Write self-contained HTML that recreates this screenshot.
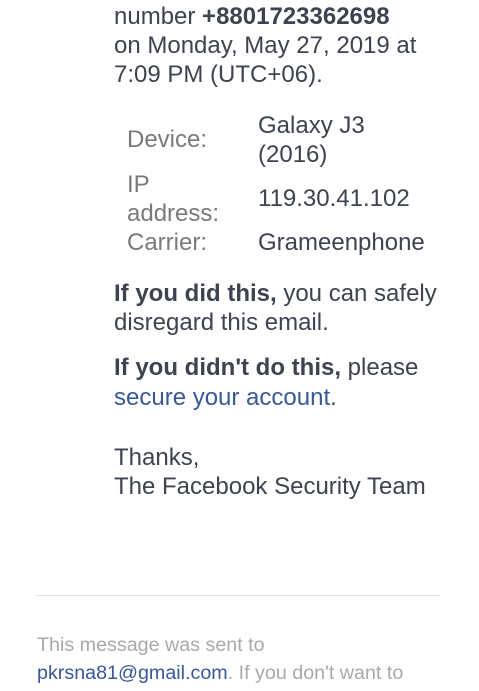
<html><head><style>
body{margin:0;width:479px;height:691px;overflow:hidden;background:#fff;font-family:"Liberation Sans",Arial,sans-serif;color:#3d4350;}
.l{position:absolute;white-space:nowrap;font-size:24px;line-height:29px;}
.g{color:#7a7a7a}
.f{position:absolute;white-space:nowrap;font-size:19.7px;line-height:28px;color:#a9a9a9;left:37px}
a{color:#385898;text-decoration:none}
b{font-weight:bold}
</style></head><body>
<div class="l" style="left:114px;top:2px">number <b>+8801723362698</b></div>
<div class="l" style="left:114px;top:31px">on Monday, May 27, 2019 at</div>
<div class="l" style="left:114px;top:60px">7:09 PM (UTC+06).</div>

<div class="l g" style="left:127px;top:125px">Device:</div>
<div class="l" style="left:258px;top:111px">Galaxy J3</div>
<div class="l" style="left:258px;top:140px">(2016)</div>
<div class="l g" style="left:127px;top:170px">IP</div>
<div class="l g" style="left:127px;top:199px">address:</div>
<div class="l" style="left:258px;top:184px">119.30.41.102</div>
<div class="l g" style="left:127px;top:228px">Carrier:</div>
<div class="l" style="left:258px;top:228px">Grameenphone</div>

<div class="l" style="left:114px;top:279px"><b>If you did this,</b> you can safely</div>
<div class="l" style="left:114px;top:308px">disregard this email.</div>
<div class="l" style="left:114px;top:353px"><b>If you didn't do this,</b> please</div>
<div class="l" style="left:114px;top:383px"><a>secure your account</a>.</div>
<div class="l" style="left:114px;top:443px">Thanks,</div>
<div class="l" style="left:114px;top:472px">The Facebook Security Team</div>

<div style="position:absolute;left:37px;top:595px;width:404px;height:1px;background:#e5e5e5"></div>
<div class="f" style="top:631px">This message was sent to</div>
<div class="f" style="top:659px"><a>pkrsna81@gmail.com</a>. If you don't want to</div>
</body></html>
